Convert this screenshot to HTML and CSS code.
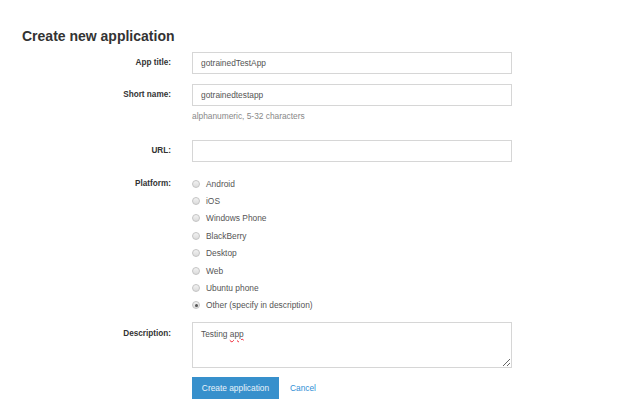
FILE: index.html
```html
<!DOCTYPE html>
<html>
<head>
<meta charset="utf-8">
<link rel="stylesheet" href="styles.css">
</head>
<body>
<div class="page">
  <h1 class="title">Create new application</h1>
  <form class="form">
    <div class="row row-title">
      <label class="label">App title:</label>
      <div class="field"><div class="input">gotrainedTestApp</div></div>
    </div>
    <div class="row row-short">
      <label class="label">Short name:</label>
      <div class="field">
        <div class="input">gotrainedtestapp</div>
        <div class="help">alphanumeric, 5-32 characters</div>
      </div>
    </div>
    <div class="row row-url">
      <label class="label">URL:</label>
      <div class="field"><div class="input"></div></div>
    </div>
    <div class="row row-platform">
      <label class="label label-top">Platform:</label>
      <div class="field options">
        <div class="option"><span class="radio"></span>Android</div>
        <div class="option"><span class="radio"></span>iOS</div>
        <div class="option"><span class="radio"></span>Windows Phone</div>
        <div class="option"><span class="radio"></span>BlackBerry</div>
        <div class="option"><span class="radio"></span>Desktop</div>
        <div class="option"><span class="radio"></span>Web</div>
        <div class="option"><span class="radio"></span>Ubuntu phone</div>
        <div class="option"><span class="radio checked"></span>Other (specify in description)</div>
      </div>
    </div>
    <div class="row row-desc">
      <label class="label label-desc">Description:</label>
      <div class="field"><div class="textarea">Testing <span class="misspelled">app</span></div></div>
    </div>
    <div class="row row-actions">
      <span class="label"></span>
      <div class="field actions">
        <span class="button">Create application</span>
        <a class="cancel">Cancel</a>
      </div>
    </div>
  </form>
</div>
</body>
</html>
```
FILE: styles.css
```css
html, body {
  margin: 0;
  padding: 0;
  background: #fff;
}
body {
  font-family: "Liberation Sans", Arial, sans-serif;
  color: #333;
}
.page {
  padding: 28px 22px 0 22px;
}
.title {
  margin: 0 0 8px 0;
  font-size: 14px;
  line-height: 16px;
  font-weight: bold;
  color: #333;
}
.form {
  display: flex;
  flex-direction: column;
}
.row {
  display: grid;
  grid-template-columns: 149px 320px;
  column-gap: 21px;
  align-items: start;
}
.label {
  text-align: right;
  font-size: 8.2px;
  font-weight: bold;
  color: #333;
  line-height: 22px;
}
.field {
  display: flex;
  flex-direction: column;
}
.input {
  box-sizing: border-box;
  height: 22px;
  border: 1px solid #d6d6d6;
  padding: 0 8px;
  font-size: 8.35px;
  line-height: 20px;
  color: #555;
}
.row-title { margin-bottom: 10px; }
.row-short { margin-bottom: 18px; }
.help {
  font-size: 8.35px;
  line-height: 12px;
  margin-top: 4px;
  color: #888;
}
.row-url { margin-bottom: 13px; }
.label-top {
  line-height: 17.4px;
}
.option {
  display: flex;
  align-items: center;
  height: 17.4px;
  font-size: 8.4px;
  color: #555;
}
.radio {
  box-sizing: border-box;
  width: 8px;
  height: 8px;
  border-radius: 50%;
  border: 1px solid #c4c4c4;
  background: linear-gradient(#f2f2f2, #dcdcdc);
  margin: 0 6px 0 0;
  position: relative;
  flex: none;
}
.radio.checked::after {
  content: "";
  position: absolute;
  left: 1.5px;
  top: 1.5px;
  width: 3px;
  height: 3px;
  border-radius: 50%;
  background: #555;
}
.row-platform { margin-bottom: 8px; }
.label-desc {
  line-height: 12px;
  padding-top: 6px;
}
.textarea {
  box-sizing: border-box;
  height: 46px;
  border: 1px solid #d6d6d6;
  padding: 5px 8px;
  font-size: 8.35px;
  line-height: 12px;
  color: #555;
  resize: vertical;
  overflow: auto;
}
.misspelled {
  text-decoration: underline wavy #e23;
  text-decoration-thickness: 1px;
  text-underline-offset: 1px;
}
.row-desc { margin-bottom: 9px; }
.actions {
  flex-direction: row;
  align-items: center;
}
.button {
  display: inline-block;
  box-sizing: border-box;
  width: 87px;
  height: 22px;
  line-height: 22px;
  text-align: center;
  background: #3790cc;
  color: #eaf3fa;
  font-size: 8.35px;
}
.cancel {
  margin-left: 11px;
  font-size: 8.35px;
  color: #2f8fd6;
}
```
